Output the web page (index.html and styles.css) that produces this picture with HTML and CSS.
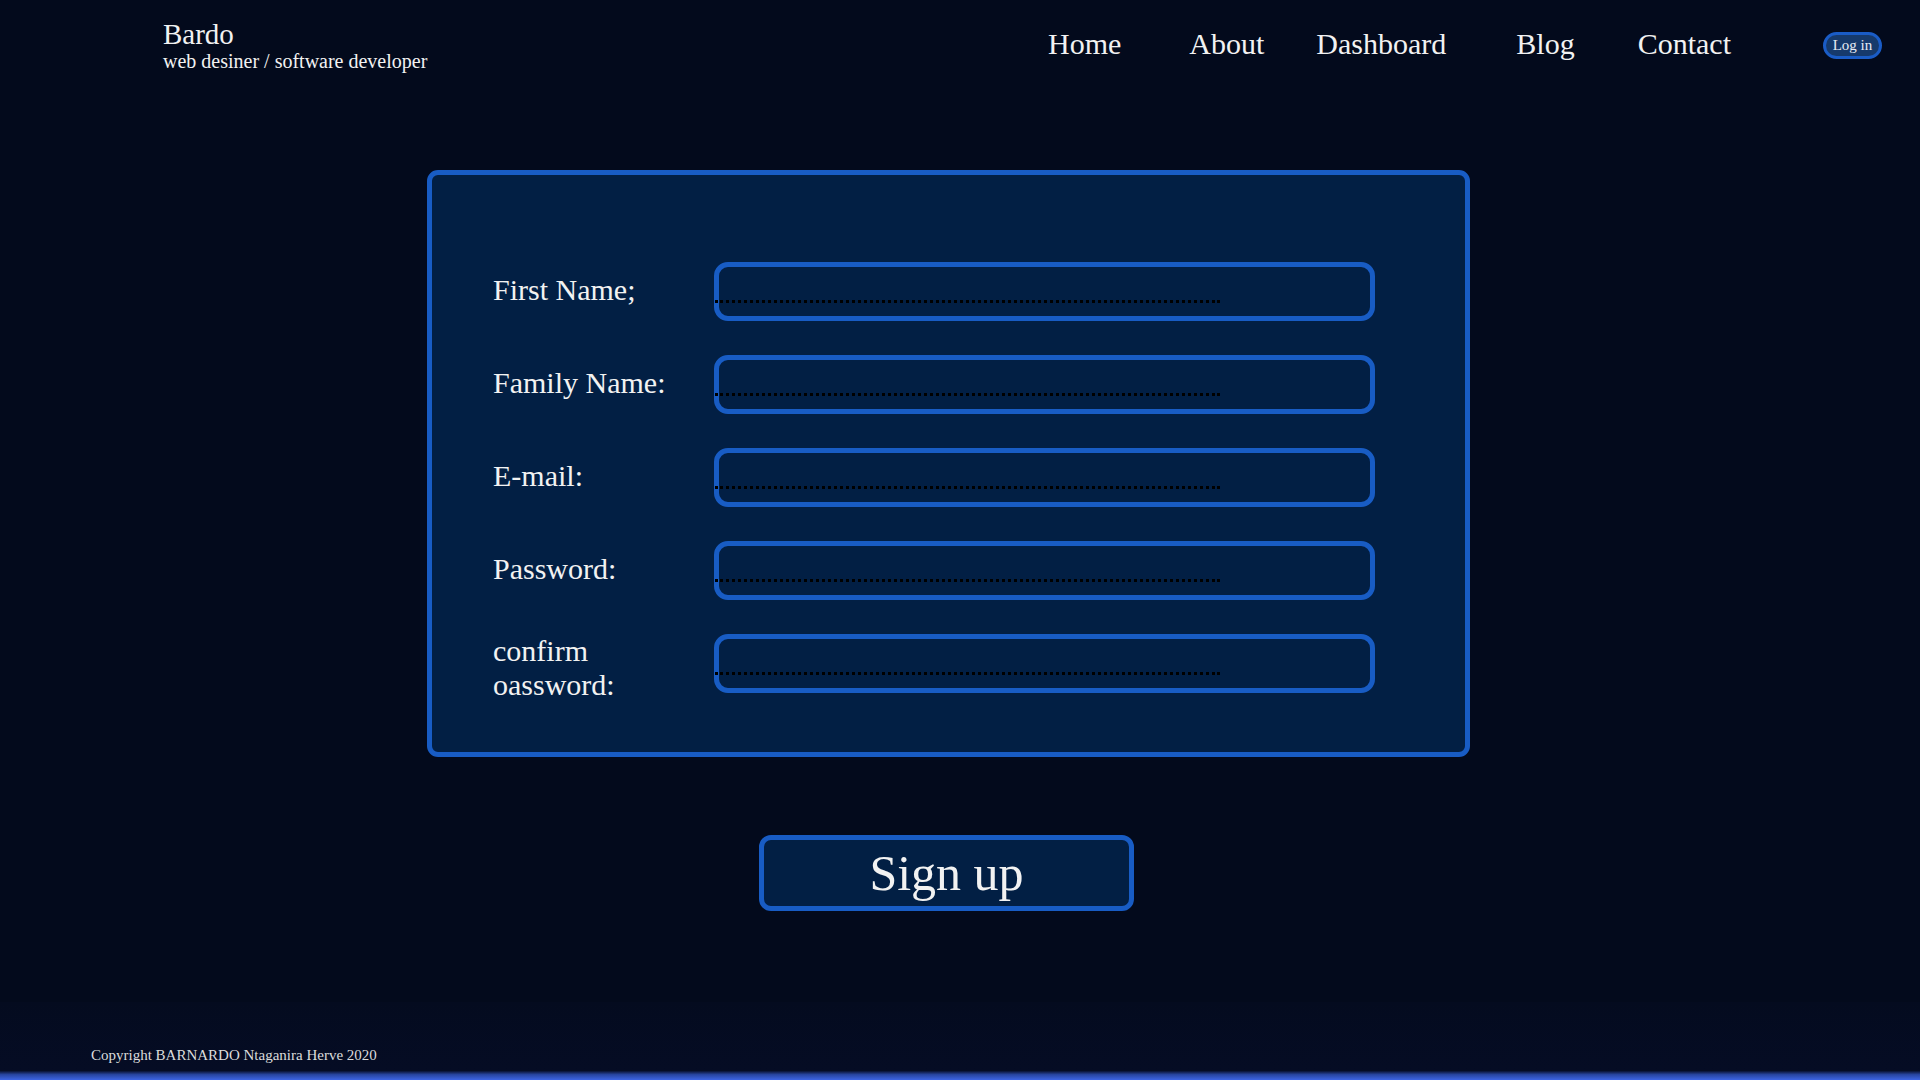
FILE: index.html
```html
<!DOCTYPE html>
<html lang="en">
<head>
    <meta charset="UTF-8">
    <meta name="viewport" content="width=device-width, initial-scale=1.0">
    <title>Sign up - Bardo</title>
    <link rel="stylesheet" href="styles.css">
</head>
<body>
<header class="top-bar">
    <div class="brand">
        <div class="brand-name">Bardo</div>
        <div class="brand-sub">web desiner / software developer</div>
    </div>
    <nav class="nav">
        <a href="#">Home</a>
        <a href="#">About</a>
        <a href="#">Dashboard</a>
        <a href="#">Blog</a>
        <a href="#">Contact</a>
        <button class="btn-login">Log in</button>
    </nav>
</header>

<main class="page">
    <form class="signup-form" onsubmit="return false;">
        <div class="form-row">
            <label for="firstName">First Name;</label>
            <div class="field"><input type="text" id="firstName"></div>
        </div>
        <div class="form-row">
            <label for="familyName">Family Name:</label>
            <div class="field"><input type="text" id="familyName"></div>
        </div>
        <div class="form-row">
            <label for="email">E-mail:</label>
            <div class="field"><input type="email" id="email"></div>
        </div>
        <div class="form-row">
            <label for="password">Password:</label>
            <div class="field"><input type="password" id="password"></div>
        </div>
        <div class="form-row two-line">
            <label for="confirm">confirm oassword:</label>
            <div class="field"><input type="password" id="confirm"></div>
        </div>
    </form>

    <button class="btn-signup">Sign up</button>
</main>

<footer class="footer">
    <p>Copyright BARNARDO Ntaganira Herve 2020</p>
</footer>
</body>
</html>
```

FILE: styles.css
```css
* {
    box-sizing: border-box;
}

html, body {
    margin: 0;
    padding: 0;
}

body {
    font-family: "Liberation Serif", "Times New Roman", serif;
    background-color: #030a1c;
    color: #f2f2f2;
    height: 1080px;
    overflow: hidden;
}

.top-bar {
    display: flex;
    justify-content: space-between;
    align-items: center;
    height: 88px;
    padding: 0 38px 0 163px;
}

.brand-name {
    font-size: 29px;
    line-height: 33px;
}

.brand-sub {
    font-size: 20px;
    line-height: 20px;
}

.nav {
    display: flex;
    align-items: center;
}

.nav a {
    color: #f2f2f2;
    text-decoration: none;
    font-size: 30px;
}

.nav a:nth-child(1) { margin-right: 68px; }
.nav a:nth-child(2) { margin-right: 52px; }
.nav a:nth-child(3) { margin-right: 70px; }
.nav a:nth-child(4) { margin-right: 63px; }
.nav a:nth-child(5) { margin-right: 92px; }

.btn-login {
    font-family: inherit;
    font-size: 15px;
    color: #e8ecf4;
    background-color: #163a6c;
    border: 3px solid #1a5cc6;
    border-radius: 14px;
    width: 59px;
    height: 27px;
    padding: 0;
    margin-top: 2px;
    cursor: pointer;
}

.page {
    display: flex;
    flex-direction: column;
    align-items: center;
    padding-right: 23px;
    margin-top: 82px;
}

.signup-form {
    width: 1043px;
    height: 587px;
    background-color: #021f44;
    border: 5px solid #185cc4;
    border-radius: 11px;
    padding: 87px 0 0 61px;
    display: flex;
    flex-direction: column;
    gap: 34px;
}

.form-row {
    display: flex;
    align-items: center;
    height: 59px;
}

.form-row label {
    width: 200px;
    margin-right: 21px;
    padding-bottom: 4px;
    font-size: 30px;
    line-height: 34px;
    color: #f2f2f2;
}

.form-row.two-line label {
    padding: 8px 0 0;
}

.field {
    width: 661px;
    height: 59px;
    border: 5px solid #185cc4;
    border-radius: 14px;
    background-color: #021f44;
}

.field input {
    display: block;
    width: 505px;
    height: 36px;
    margin: 0 0 0 -4px;
    padding: 0;
    border: none;
    border-bottom: 3px dotted #000;
    background: transparent;
    color: #f2f2f2;
    font-family: inherit;
    font-size: 20px;
    outline: none;
}

.btn-signup {
    margin: 78px 4px 0 0;
    width: 375px;
    height: 76px;
    background-color: #021f44;
    border: 5px solid #185cc4;
    border-radius: 12px;
    color: #f2f2f2;
    font-family: inherit;
    font-size: 50px;
    padding: 0;
    cursor: pointer;
}

.footer {
    margin-top: 91px;
    height: 78px;
    background: linear-gradient(to bottom, #040b1f 0%, #050c24 88%, #27449e 93%, #3d64e2 100%);
    padding: 45px 0 0 91px;
}

.footer p {
    margin: 0;
    font-size: 15px;
    color: #dcdcdc;
}
```
